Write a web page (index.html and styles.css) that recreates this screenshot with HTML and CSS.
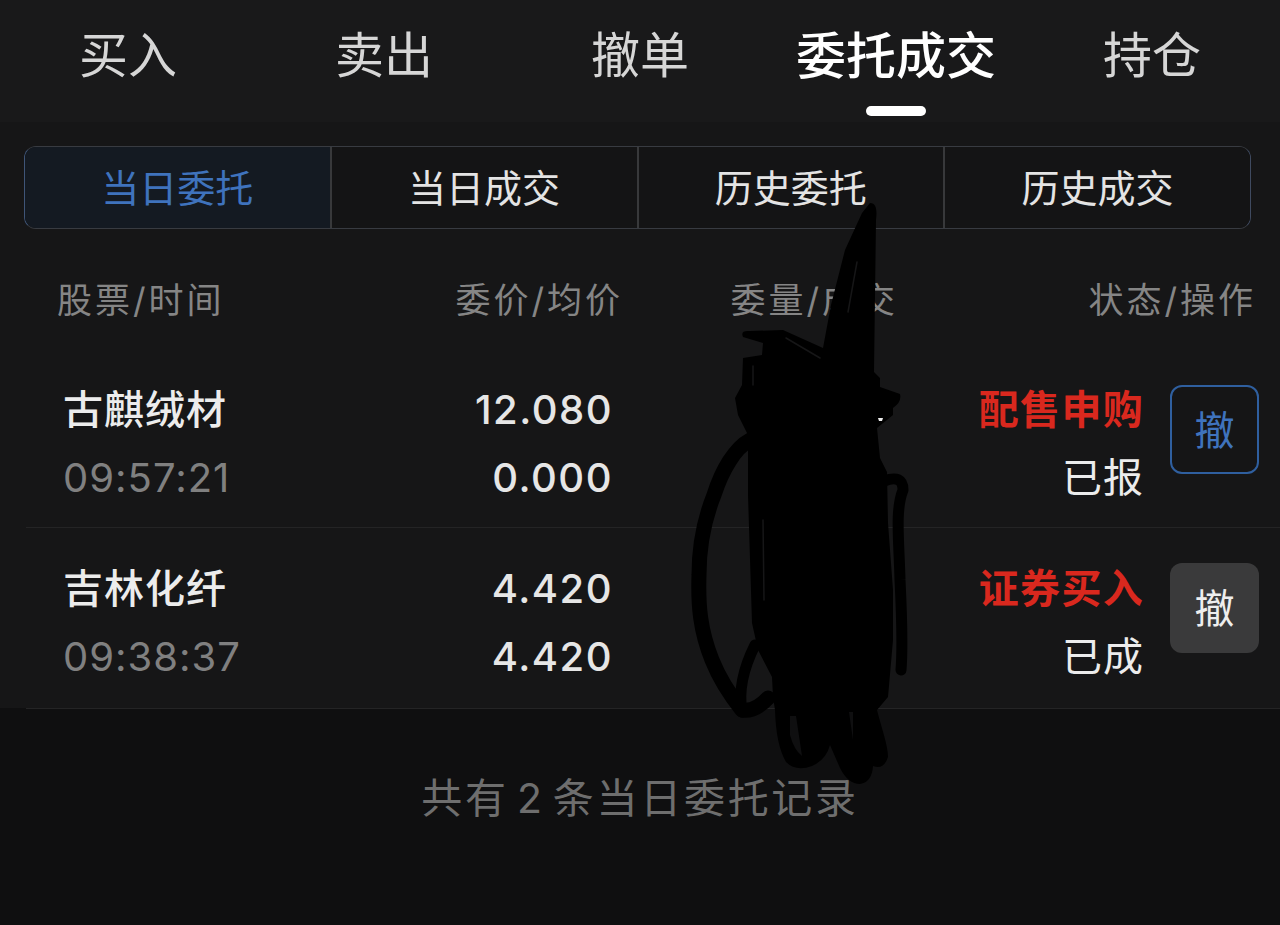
FILE: index.html
```html
<!DOCTYPE html>
<html lang="zh-CN">
<head>
    <meta charset="UTF-8">
    <meta name="viewport" content="width=device-width, initial-scale=1.0">
    <title>委托成交</title>
    <link rel="stylesheet" href="styles.css">
</head>
<body>

<!-- Top tabs -->
<div class="tabs">
    <a class="tab" href="#">买入</a>
    <a class="tab" href="#">卖出</a>
    <a class="tab" href="#">撤单</a>
    <a class="tab active" href="#">委托成交</a>
    <a class="tab" href="#">持仓</a>
</div>

<div class="panel">
    <!-- Segment switch -->
    <div class="segment">
        <a class="seg-item active" href="#">当日委托</a>
        <a class="seg-item" href="#">当日成交</a>
        <a class="seg-item" href="#">历史委托</a>
        <a class="seg-item" href="#">历史成交</a>
    </div>

    <!-- Table header -->
    <div class="table-head">
        <span>股票/时间</span>
        <span class="right">委价/均价</span>
        <span class="right">委量/成交</span>
        <span class="right">状态/操作</span>
    </div>

    <!-- Orders -->
    <div class="order">
        <div class="cell">
            <div class="name">古麒绒材</div>
            <div class="time">09:57:21</div>
        </div>
        <div class="cell price">
            <div>12.080</div>
            <div>0.000</div>
        </div>
        <div class="cell status">
            <div class="kind">配售申购</div>
            <div>已报</div>
        </div>
        <button class="cancel" type="button">撤</button>
    </div>
    <div class="order">
        <div class="cell">
            <div class="name">吉林化纤</div>
            <div class="time">09:38:37</div>
        </div>
        <div class="cell price">
            <div>4.420</div>
            <div>4.420</div>
        </div>
        <div class="cell status">
            <div class="kind">证券买入</div>
            <div>已成</div>
        </div>
        <button class="cancel done" type="button">撤</button>
    </div>
</div>

<div class="summary">共有 2 条当日委托记录</div>

<!-- Hand drawn scribble over the quantity column -->
<svg class="scribble" width="1280" height="925" viewBox="0 0 1280 925" fill="none">
    <path fill="#000" d="M870 203 C877 203 877 212 876 220 L874 372 L880 378 L880 387 L900 394 Q902 402 893 408 L893 415 L877 428 L880 458 L887 472 L888 523 L893 590 L893 640 L888 697 L877 710 C882 730 888 745 888 757 Q884 770 873 766 Q872 782 860 784 Q848 784 840 768 L830 745 Q826 760 812 766 Q796 772 786 762 Q776 745 775 710 L773 697 L772 677 L758 650 L752 623 L748 495 L748 435 L738 415 L735 398 L742 385 L743 358 L762 355 L763 343 L743 337 Q740 330 750 331 L783 330 L823 348 L831 305 L845 250 L862 213 Z"/>
    <g stroke="#000" stroke-linecap="round" stroke-linejoin="round">
        <path stroke-width="15" d="M750 440 C735 448 722 470 714 495 C704 520 699 545 699 575 C698 605 700 630 712 660 C720 680 730 695 742 710 Q755 712 768 698"/>
        <path stroke-width="11" d="M742 712 C738 690 745 665 755 645"/>
        <path stroke-width="11" d="M884 481 Q903 474 903 490 C895 510 899 540 900 580 C902 620 903 645 901 670"/>
    </g>
    <!-- gaps left between the pen strokes -->
    <g stroke="#161617" stroke-width="1.5" stroke-linecap="round">
        <path d="M857 262 L848 312"/>
        <path d="M786 338 L820 358"/>
        <path d="M753 366 L753 385"/>
        <path d="M763 520 L764 600"/>
    </g>
    <path fill="#0f0f10" d="M790 716 L796 716 L802 756 Q794 750 790 735 Z"/>
    <path fill="#0f0f10" d="M849 712 L853 712 L853 740 Z"/>
    <path fill="#eee" d="M878 418 L883 418 L882 421 L879 421 Z"/>
</svg>

</body>
</html>
```

FILE: styles.css
```css
/* Basic Reset */
* {
    box-sizing: border-box;
    margin: 0;
    padding: 0;
    font-family: Inter, "Noto Sans CJK SC", sans-serif;
}

body {
    position: relative;
    width: 1280px;
    height: 925px;
    overflow: hidden;
    background-color: #0f0f10;
    color: #eee;
}

a {
    color: inherit;
    text-decoration: none;
}

/* Top Tabs */
.tabs {
    display: flex;
    height: 122px;
    background-color: #19191a;
}

.tab {
    position: relative;
    flex: 1;
    padding-top: 21px;
    line-height: 70px;
    text-align: center;
    font-size: 49px;
    color: #d6d6d6;
}

.tab.active {
    color: #fff;
    font-weight: 500;
    font-size: 50px;
}

.tab.active::after {
    content: "";
    position: absolute;
    left: 98px;
    top: 106px;
    width: 60px;
    height: 10px;
    border-radius: 5px;
    background-color: #fff;
}

/* Main Panel */
.panel {
    height: 586px;
    padding-top: 24px;
    background-color: #161617;
}

.segment {
    display: flex;
    height: 83px;
    margin: 0 29px 0 24px;
    border: 1px solid #383b41;
    border-left-color: #3f5578;
    border-right-color: #3f4a60;
    border-radius: 12px;
    overflow: hidden;
}

.seg-item {
    flex: 1;
    line-height: 82px;
    text-align: center;
    font-size: 38px;
    color: #e4e4e4;
    background-color: #141415;
    border-left: 2px solid #38393b;
}

.seg-item.active {
    color: #3f73bd;
    background-color: #141a22;
    border-left: 0;
}

.table-head {
    display: grid;
    grid-template-columns: 300px 266px 275px 1fr;
    padding: 46px 24px 26px 57px;
    line-height: 50px;
    font-size: 35px;
    letter-spacing: 3px;
    color: #858585;
}

.right {
    text-align: right;
}

/* Order Rows */
.order {
    display: grid;
    grid-template-columns: 300px 250px 1fr 89px;
    margin-left: 26px;
    padding: 25px 21px 15px 37px;
    border-bottom: 1px solid #242425;
}

.order + .order {
    padding-top: 27px;
    padding-bottom: 17px;
}

.cell {
    line-height: 68px;
    font-size: 40px;
    letter-spacing: 1px;
}

.name {
    font-weight: 500;
    color: #ececec;
}

.time {
    color: #808080;
}

.price {
    text-align: right;
    font-weight: 500;
    letter-spacing: 1.5px;
    color: #e6e6e6;
}

.status {
    margin-right: 26px;
    text-align: right;
    color: #ececec;
}

.kind {
    color: #d9281e;
    font-weight: 700;
    letter-spacing: 1.3px;
}

.cancel {
    height: 89px;
    margin-top: 9px;
    padding-bottom: 4px;
    border: 2px solid #2f5f9f;
    border-radius: 12px;
    background-color: #151516;
    color: #3f73bd;
    font-size: 40px;
}

.cancel.done {
    height: 90px;
    margin-top: 8px;
    border: none;
    background-color: #3a3a3b;
    color: #eee;
}

/* Footer Text */
.summary {
    padding-top: 65px;
    line-height: 50px;
    text-align: center;
    font-size: 41px;
    letter-spacing: 2.7px;
    word-spacing: -6px;
    color: #6e6e6e;
}

.scribble {
    position: absolute;
    left: 0;
    top: 0;
}
```
